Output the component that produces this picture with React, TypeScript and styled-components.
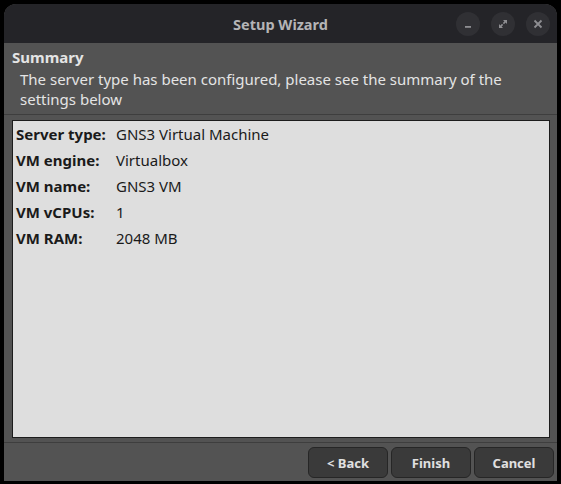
import React from "react";
import styled, { createGlobalStyle } from "styled-components";

const GlobalStyle = createGlobalStyle`
  html, body {
    margin: 0;
    padding: 0;
    background: #000;
  }
  body {
    font-family: "Noto Sans", "Open Sans", sans-serif;
  }
`;

const rows = [
  { label: "Server type:", value: "GNS3 Virtual Machine" },
  { label: "VM engine:", value: "Virtualbox" },
  { label: "VM name:", value: "GNS3 VM" },
  { label: "VM vCPUs:", value: "1" },
  { label: "VM RAM:", value: "2048 MB" },
];

export default function App() {
  return (
    <>
      <GlobalStyle />
      <Screen>
        <Window>
          <TitleBar>
            <Title>Setup Wizard</Title>
            <TitleButtons>
              <RoundButton>
                <svg width="10" height="10" viewBox="0 0 10 10">
                  <rect x="2" y="7" width="6" height="1.8" fill="#8e8e92" />
                </svg>
              </RoundButton>
              <RoundButton>
                <svg width="10" height="10" viewBox="0 0 10 10">
                  <path d="M5 1h4v4L7.6 3.6 6 5.2 4.8 4l1.6-1.6z" fill="#8e8e92" />
                  <path d="M1 5v4h4L3.6 7.6 5.2 6 4 4.8 2.4 6.4z" fill="#8e8e92" />
                </svg>
              </RoundButton>
              <RoundButton>
                <svg width="10" height="10" viewBox="0 0 10 10">
                  <path d="M1.5 1.5l7 7M8.5 1.5l-7 7" stroke="#8e8e92" strokeWidth="1.8" />
                </svg>
              </RoundButton>
            </TitleButtons>
          </TitleBar>
          <Body>
            <Header>
              <Heading>Summary</Heading>
              <Description>
                The server type has been configured, please see the summary of the settings below
              </Description>
            </Header>
            <ContentArea>
              <SummaryBox>
                {rows.map((r) => (
                  <Row key={r.label}>
                    <Label>{r.label}</Label>
                    <Value>{r.value}</Value>
                  </Row>
                ))}
              </SummaryBox>
            </ContentArea>
            <Footer>
              <DialogButton>&lt; Back</DialogButton>
              <DialogButton>Finish</DialogButton>
              <DialogButton>Cancel</DialogButton>
            </Footer>
          </Body>
        </Window>
      </Screen>
    </>
  );
}

const Screen = styled.div`
  width: 561px;
  height: 484px;
  padding: 4px 4px 3px 4px;
  box-sizing: border-box;
  background: #000;
`;

const Window = styled.div`
  width: 553px;
  height: 477px;
  display: flex;
  flex-direction: column;
  border-radius: 12px 12px 0 0;
  overflow: hidden;
  background: #535353;
`;

const TitleBar = styled.div`
  position: relative;
  height: 39px;
  flex: none;
  background: #242428;
  display: flex;
  align-items: center;
  justify-content: center;
`;

const Title = styled.div`
  color: #b4b4b6;
  font-weight: bold;
  font-size: 14.5px;
`;

const TitleButtons = styled.div`
  position: absolute;
  right: 7px;
  top: 8px;
  display: flex;
  gap: 11px;
`;

const RoundButton = styled.div`
  width: 24px;
  height: 24px;
  border-radius: 50%;
  background: #303034;
  display: flex;
  align-items: center;
  justify-content: center;
`;

const Body = styled.div`
  flex: 1;
  display: flex;
  flex-direction: column;
`;

const Header = styled.div`
  padding: 4px 8px 5px 8px;
  border-bottom: 1px solid #3e3e3e;
  color: #e4e4e4;
  font-size: 15px;
  line-height: 20px;
`;

const Heading = styled.div`
  font-weight: bold;
  margin-bottom: 2px;
`;

const Description = styled.div`
  padding-left: 8px;
  padding-right: 30px;
`;

const ContentArea = styled.div`
  flex: 1;
  padding: 5px 7px 4px 8px;
  border-bottom: 1px solid #3e3e3e;
  display: flex;
`;

const SummaryBox = styled.div`
  flex: 1;
  background: #dedede;
  border: 1px solid #1c1c1c;
  padding: 0 3px;
  display: flex;
  flex-direction: column;
`;

const Row = styled.div`
  display: flex;
  height: 26px;
  align-items: center;
  font-size: 15px;
  color: #1a1a1a;
`;

const Label = styled.div`
  width: 100px;
  font-weight: bold;
`;

const Value = styled.div``;

const Footer = styled.div`
  height: 38px;
  flex: none;
  display: flex;
  justify-content: flex-end;
  align-items: center;
  gap: 3px;
  padding: 1px 3px 0 0;
  box-sizing: border-box;
`;

const DialogButton = styled.div`
  width: 80px;
  height: 31px;
  box-sizing: border-box;
  border: 1px solid #262626;
  border-radius: 6px;
  background: #3a3a3a;
  color: #e0e0e0;
  font-weight: bold;
  font-size: 13px;
  display: flex;
  align-items: center;
  justify-content: center;
`;
